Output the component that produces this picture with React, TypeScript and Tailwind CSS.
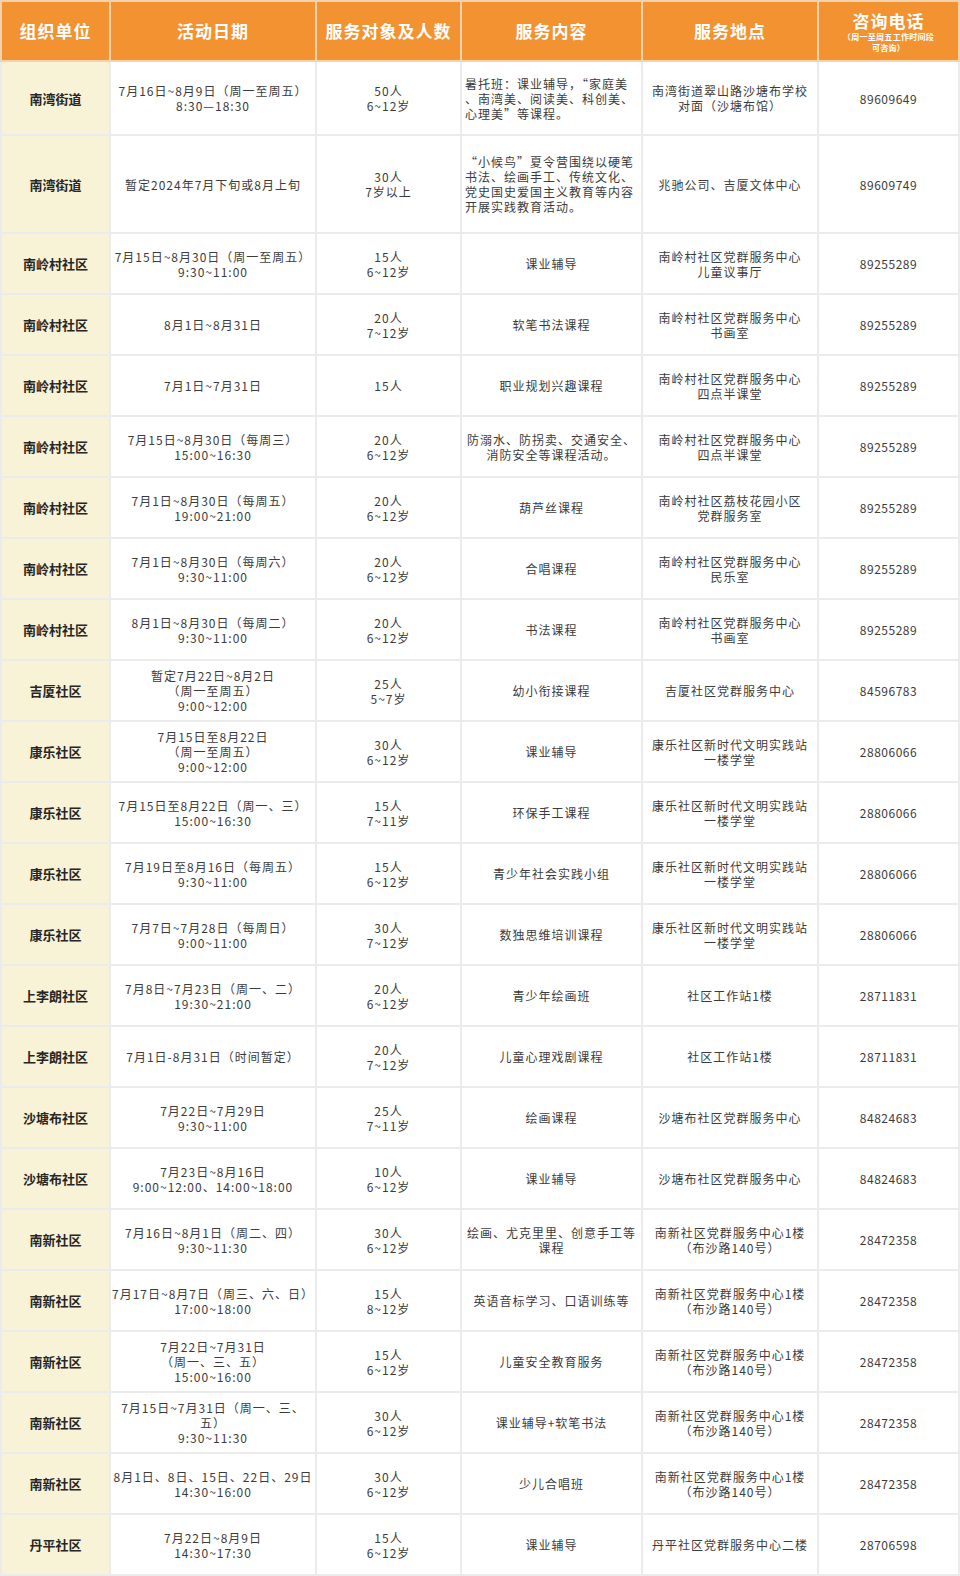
type Row = {
  org: string
  date: string[]
  people: string[]
  content: string[]
  contentLeft?: boolean
  place: string[]
  phone: string
  h: string
}

const nanling = '南岭村社区党群服务中心'
const kangle = ['康乐社区新时代文明实践站', '一楼学堂']
const nanxin = ['南新社区党群服务中心1楼', '（布沙路140号）']

const rows: Row[] = [
  { org: '南湾街道', date: ['7月16日~8月9日（周一至周五）', '8:30—18:30'], people: ['50人', '6~12岁'], content: ['暑托班：课业辅导，“家庭美', '、南湾美、阅读美、科创美、', '心理美”等课程。'], contentLeft: true, place: ['南湾街道翠山路沙塘布学校', '对面（沙塘布馆）'], phone: '89609649', h: 'h-[74px]' },
  { org: '南湾街道', date: ['暂定2024年7月下旬或8月上旬'], people: ['30人', '7岁以上'], content: ['“小候鸟”夏令营围绕以硬笔', '书法、绘画手工、传统文化、', '党史国史爱国主义教育等内容', '开展实践教育活动。'], contentLeft: true, place: ['兆驰公司、吉厦文体中心'], phone: '89609749', h: 'h-[98px]' },
  { org: '南岭村社区', date: ['7月15日~8月30日（周一至周五）', '9:30~11:00'], people: ['15人', '6~12岁'], content: ['课业辅导'], place: [nanling, '儿童议事厅'], phone: '89255289', h: 'h-[61px]' },
  { org: '南岭村社区', date: ['8月1日~8月31日'], people: ['20人', '7~12岁'], content: ['软笔书法课程'], place: [nanling, '书画室'], phone: '89255289', h: 'h-[61px]' },
  { org: '南岭村社区', date: ['7月1日~7月31日'], people: ['15人'], content: ['职业规划兴趣课程'], place: [nanling, '四点半课堂'], phone: '89255289', h: 'h-[61px]' },
  { org: '南岭村社区', date: ['7月15日~8月30日（每周三）', '15:00~16:30'], people: ['20人', '6~12岁'], content: ['防溺水、防拐卖、交通安全、', '消防安全等课程活动。'], place: [nanling, '四点半课堂'], phone: '89255289', h: 'h-[61px]' },
  { org: '南岭村社区', date: ['7月1日~8月30日（每周五）', '19:00~21:00'], people: ['20人', '6~12岁'], content: ['葫芦丝课程'], place: ['南岭村社区荔枝花园小区', '党群服务室'], phone: '89255289', h: 'h-[61px]' },
  { org: '南岭村社区', date: ['7月1日~8月30日（每周六）', '9:30~11:00'], people: ['20人', '6~12岁'], content: ['合唱课程'], place: [nanling, '民乐室'], phone: '89255289', h: 'h-[61px]' },
  { org: '南岭村社区', date: ['8月1日~8月30日（每周二）', '9:30~11:00'], people: ['20人', '6~12岁'], content: ['书法课程'], place: [nanling, '书画室'], phone: '89255289', h: 'h-[61px]' },
  { org: '吉厦社区', date: ['暂定7月22日~8月2日', '（周一至周五）', '9:00~12:00'], people: ['25人', '5~7岁'], content: ['幼小衔接课程'], place: ['吉厦社区党群服务中心'], phone: '84596783', h: 'h-[61px]' },
  { org: '康乐社区', date: ['7月15日至8月22日', '（周一至周五）', '9:00~12:00'], people: ['30人', '6~12岁'], content: ['课业辅导'], place: kangle, phone: '28806066', h: 'h-[61px]' },
  { org: '康乐社区', date: ['7月15日至8月22日（周一、三）', '15:00~16:30'], people: ['15人', '7~11岁'], content: ['环保手工课程'], place: kangle, phone: '28806066', h: 'h-[61px]' },
  { org: '康乐社区', date: ['7月19日至8月16日（每周五）', '9:30~11:00'], people: ['15人', '6~12岁'], content: ['青少年社会实践小组'], place: kangle, phone: '28806066', h: 'h-[61px]' },
  { org: '康乐社区', date: ['7月7日~7月28日（每周日）', '9:00~11:00'], people: ['30人', '7~12岁'], content: ['数独思维培训课程'], place: kangle, phone: '28806066', h: 'h-[61px]' },
  { org: '上李朗社区', date: ['7月8日~7月23日（周一、二）', '19:30~21:00'], people: ['20人', '6~12岁'], content: ['青少年绘画班'], place: ['社区工作站1楼'], phone: '28711831', h: 'h-[61px]' },
  { org: '上李朗社区', date: ['7月1日-8月31日（时间暂定）'], people: ['20人', '7~12岁'], content: ['儿童心理戏剧课程'], place: ['社区工作站1楼'], phone: '28711831', h: 'h-[61px]' },
  { org: '沙塘布社区', date: ['7月22日~7月29日', '9:30~11:00'], people: ['25人', '7~11岁'], content: ['绘画课程'], place: ['沙塘布社区党群服务中心'], phone: '84824683', h: 'h-[61px]' },
  { org: '沙塘布社区', date: ['7月23日~8月16日', '9:00~12:00、14:00~18:00'], people: ['10人', '6~12岁'], content: ['课业辅导'], place: ['沙塘布社区党群服务中心'], phone: '84824683', h: 'h-[61px]' },
  { org: '南新社区', date: ['7月16日~8月1日（周二、四）', '9:30~11:30'], people: ['30人', '6~12岁'], content: ['绘画、尤克里里、创意手工等', '课程'], place: nanxin, phone: '28472358', h: 'h-[61px]' },
  { org: '南新社区', date: ['7月17日~8月7日（周三、六、日）', '17:00~18:00'], people: ['15人', '8~12岁'], content: ['英语音标学习、口语训练等'], place: nanxin, phone: '28472358', h: 'h-[61px]' },
  { org: '南新社区', date: ['7月22日~7月31日', '（周一、三、五）', '15:00~16:00'], people: ['15人', '6~12岁'], content: ['儿童安全教育服务'], place: nanxin, phone: '28472358', h: 'h-[61px]' },
  { org: '南新社区', date: ['7月15日~7月31日（周一、三、', '五）', '9:30~11:30'], people: ['30人', '6~12岁'], content: ['课业辅导+软笔书法'], place: nanxin, phone: '28472358', h: 'h-[61px]' },
  { org: '南新社区', date: ['8月1日、8日、15日、22日、29日', '14:30~16:00'], people: ['30人', '6~12岁'], content: ['少儿合唱班'], place: nanxin, phone: '28472358', h: 'h-[61px]' },
  { org: '丹平社区', date: ['7月22日~8月9日', '14:30~17:30'], people: ['15人', '6~12岁'], content: ['课业辅导'], place: ['丹平社区党群服务中心二楼'], phone: '28706598', h: 'h-[61px]' },
]

function Lines({ lines }: { lines: string[] }) {
  return (
    <>
      {lines.map((l, i) => (
        <div key={i} className="whitespace-nowrap">{l}</div>
      ))}
    </>
  )
}

const cell = 'border-2 border-[#ebebeb] p-0 align-middle'
const head = 'border-2 border-[#f3d2b0] p-0 align-middle text-white font-bold text-[17px] tracking-[1px]'

export default function App() {
  return (
    <div className="w-[960px] h-[1576px] bg-white overflow-hidden font-['Noto_Sans_CJK_SC',sans-serif]">
      <table className="table-fixed border-collapse w-[958px] text-center">
        <colgroup>
          <col className="w-[109px]" />
          <col className="w-[206px]" />
          <col className="w-[145px]" />
          <col className="w-[181px]" />
          <col className="w-[176px]" />
          <col className="w-[141px]" />
        </colgroup>
        <thead>
          <tr className="h-[60px] bg-[#f39231]">
            <th className={head}>组织单位</th>
            <th className={head}>活动日期</th>
            <th className={head}>服务对象及人数</th>
            <th className={head}>服务内容</th>
            <th className={head}>服务地点</th>
            <th className={head}>
              <div className="leading-[21px]">咨询电话</div>
              <div className="text-[8px] leading-[11px] tracking-[0.3px]">（周一至周五工作时间段</div>
              <div className="text-[8px] leading-[11px] tracking-[0.3px]">可咨询）</div>
            </th>
          </tr>
        </thead>
        <tbody className="text-[12px] leading-[15px] tracking-[1px] text-[#3b3b3b]">
          {rows.map((r, i) => (
            <tr key={i} className={r.h}>
              <td className={`${cell} bg-[#f8f3d7] text-[13px] font-bold text-[#262626] tracking-normal`}>{r.org}</td>
              <td className={cell}><Lines lines={r.date} /></td>
              <td className={cell}><Lines lines={r.people} /></td>
              <td className={`${cell} ${r.contentLeft ? 'text-left pl-[3px]' : ''}`}><Lines lines={r.content} /></td>
              <td className={cell}><Lines lines={r.place} /></td>
              <td className={`${cell} tracking-[0.5px]`}>{r.phone}</td>
            </tr>
          ))}
        </tbody>
      </table>
    </div>
  )
}
